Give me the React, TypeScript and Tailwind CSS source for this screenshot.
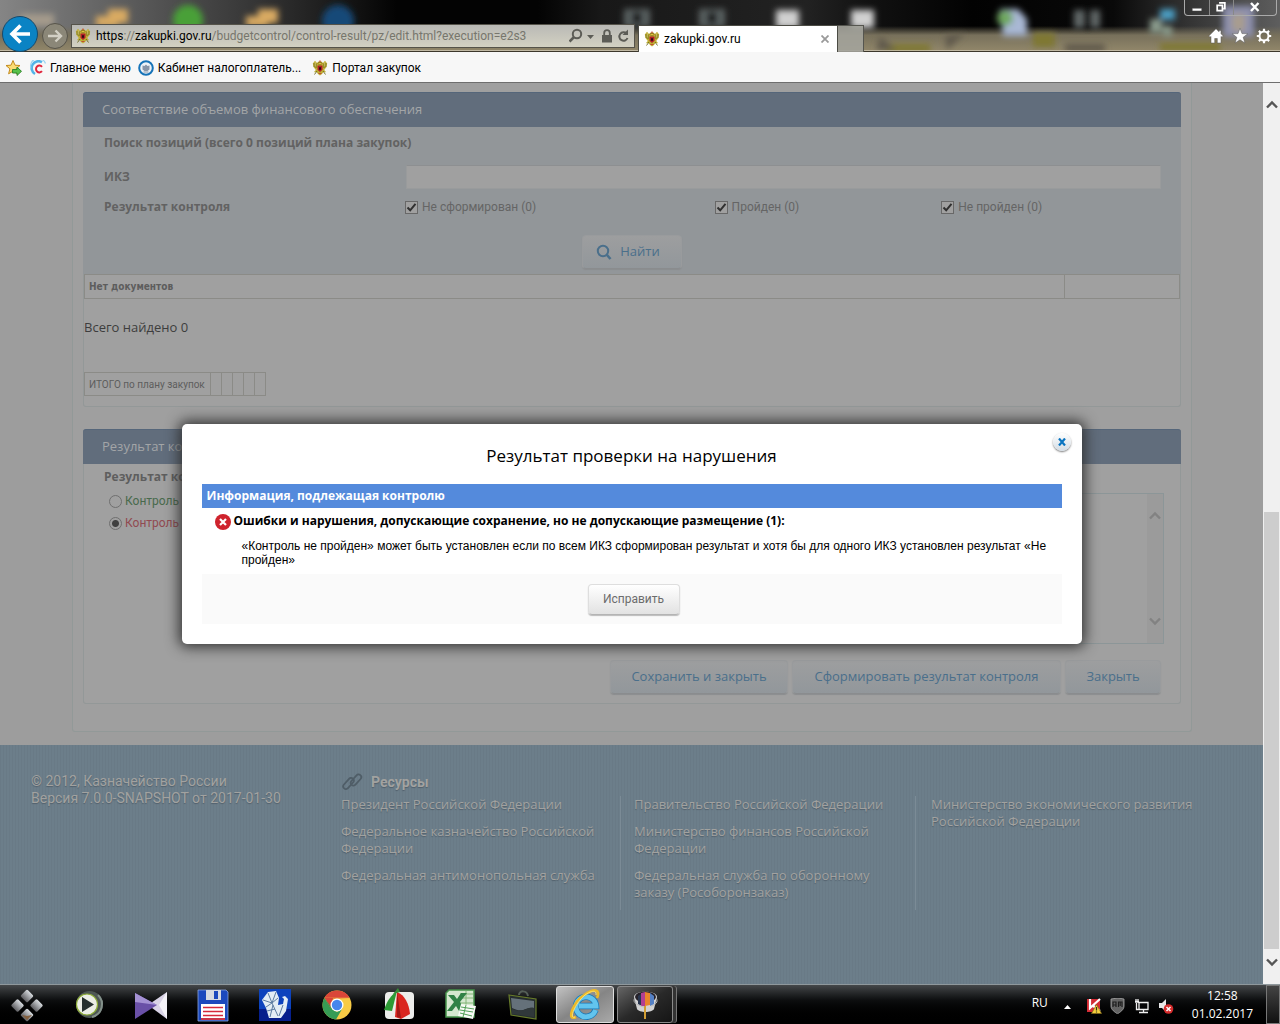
import React from "react";

function Eagle() {
  return (
    <svg className="h-4 w-4 shrink-0" viewBox="0 0 16 16" aria-hidden="true">
      <path d="M.800 3.500L3 .800l2 2.200 1.500-1.500h3L11 3l2-2.200 2.200 2.700-.700 3.500-2.300 3 2 2.300-2.700-.300-1.500 2L8 15.500 6 14l-1.500-2-2.700.300 2-2.300L1.500 7z" fill="#bfae35" />
      <path d="M2.200 3v4M4 3.500V8M13.800 3v4M12 3.500V8M5 11l-2.500 3.500M11 11l2.500 3.500" stroke="#6b681c" strokeWidth=".9" />
      <path d="M3.200 2.500v4M12.800 2.500v4" stroke="#e9dd86" strokeWidth=".7" />
      <path d="M5.800 3.500L7 2l1 1 1-1 1.200 1.500L8 5z" fill="#e2c33c" stroke="#705d1a" strokeWidth=".6" />
      <path d="M5.500 5.500h5v4.300L8 12 5.500 9.800z" fill="#b01f27" />
      <path d="M7 7.200h2v2.600H7z" fill="#2b1015" />
      <path d="M7 1.200h2M6.500 13.500h3" stroke="#c04d30" />
    </svg>
  );
}

function Wallpaper() {
  return (
    <svg className="absolute inset-0 h-full w-full" preserveAspectRatio="none" viewBox="0 0 1280 52" aria-hidden="true">
      <defs>
        <linearGradient id="sky" x1="0" x2="1">
          <stop offset="0" stopColor="#858585" />
          <stop offset=".1" stopColor="#5c5c5c" />
          <stop offset=".2" stopColor="#353535" />
          <stop offset=".255" stopColor="#1d1d1d" />
          <stop offset=".31" stopColor="#030303" />
          <stop offset=".42" stopColor="#030303" />
          <stop offset=".47" stopColor="#181818" />
          <stop offset=".63" stopColor="#222" />
          <stop offset=".68" stopColor="#111" />
          <stop offset=".76" stopColor="#020202" />
          <stop offset=".87" stopColor="#090909" />
          <stop offset=".93" stopColor="#343434" />
          <stop offset="1" stopColor="#5e5e5e" />
        </linearGradient>
        <linearGradient id="sand" y2="1" x2="0">
          <stop offset="0" stopColor="#77705b" stopOpacity="0" />
          <stop offset=".35" stopColor="#77705b" />
          <stop offset="1" stopColor="#93886b" />
        </linearGradient>
        <filter id="soft" filterUnits="userSpaceOnUse" x="0" y="-10" width="1280" height="80">
          <feGaussianBlur stdDeviation="3" />
        </filter>
      </defs>
      <path fill="url(#sky)" d="M0 0h1280v52H0z" />
      <path fill="url(#sand)" d="M0 26h1280v26H0z" />
      <g filter="url(#soft)">
        <path d="M20 14h34v12H20z" fill="#a59b8c" />
        <path d="M108 9h20v14h-10v4H96v-11h12z" fill="#d9aa62" />
        <circle cx="188" cy="20" r="15" fill="#48a038" />
        <path d="M258 9h20v14h-10v4h-22v-11h12z" fill="#d9aa62" />
        <circle cx="338" cy="21" r="16" fill="#184a78" />
        <path d="M624 9h26v18h-26zM699 9h26v18h-26z" fill="#5c6363" />
        <path d="M632 12h10v12h-10zM707 12h10v12h-10z" fill="#15191b" />
        <path d="M776 10h23v18h-23zM851 10h23v18h-23z" fill="#d0d0d0" />
        <path d="M1000 9h18l9 10v17h-24z" fill="#a9b8d4" />
        <circle cx="1005" cy="18" r="8" fill="#70a860" />
        <path d="M1074 10h26v18h-26z" fill="#656c6c" />
        <path d="M1083 10h9v18h-9z" fill="#0e1111" />
        <path d="M1160 9h15v11h-15z" fill="#4b9fc4" />
        <path d="M1150 19h12v14h-12zM1163 26h9v10h-9z" fill="#8b9c8d" />
        <path d="M1223 6h31v31h-31z" fill="#8d90ae" />
        <path d="M1232 14h13v17h-13z" fill="#a99d8e" />
        <path d="M885 44h45v9h-45zM1033 33h22v14h-22zM1160 43h60v8h-60z" fill="#7f7830" />
        <path d="M945 36l20-3-18 17zM1065 44h40v8h-40zM880 36l16 14h-20z" fill="#5f594b" />
      </g>
      <path d="M0 50.500h1280" stroke="#d5cfbd" strokeOpacity=".7" />
      <path d="M0 51.500h1280" stroke="#3d382c" />
    </svg>
  );
}

const frame = "rounded-[3px] border border-[#939898]";

function SectionHead({ children }: { children: React.ReactNode }) {
  return (
    <h2 className="-mx-px flex h-[35px] items-center rounded-t-[3px] border-t border-[#55667a] bg-[#616d7c] px-[19px] text-[13px] text-[#a3a5a7]">
      {children}
    </h2>
  );
}

function Check({ label }: { label: string }) {
  return (
    <label className="flex items-center gap-1 font-[Roboto] text-xs text-[#656565]">
      <span className="relative flex h-[13px] w-[13px]">
        <input type="checkbox" defaultChecked className="h-[13px] w-[13px] appearance-none border border-[#686868] bg-[#a0a0a0]" />
        <svg className="pointer-events-none absolute inset-0" viewBox="0 0 13 13" aria-hidden="true">
          <path d="M2.500 6.500L5.200 9.300 10.500 2.800" fill="none" stroke="#303030" strokeWidth="2" />
        </svg>
      </span>
      {label}
    </label>
  );
}

function Radio({ label, tone, checked }: { label: string; tone: string; checked?: boolean }) {
  return (
    <label className={"flex h-[22px] items-center gap-[3px] font-[Roboto] text-xs " + tone}>
      <input
        type="radio"
        name="result"
        defaultChecked={checked}
        className="h-[13px] w-[13px] appearance-none rounded-full border border-[#6f6f6f] bg-[#a0a0a0] checked:bg-[radial-gradient(circle,#404040_3px,#a0a0a0_4px)]"
      />
      {label}
    </label>
  );
}

const pageButton =
  "flex h-[34px] items-center justify-center rounded-[4px] border border-[#999b9d] border-b-[#8a8c8e] bg-linear-to-b from-[#9d9e9f] to-[#92979b] text-[13px] text-[#4a6f8b] shadow-[0_1px_1px_#8b8d8f]";

function Arrow({ up, className }: { up?: boolean; className: string }) {
  return (
    <svg className={className} viewBox="0 0 12 9" aria-hidden="true">
      <path d={up ? "M1 7.500L6 2.500 11 7.500" : "M1 1.500L6 6.500 11 1.500"} fill="none" stroke="currentColor" strokeWidth="2.400" />
    </svg>
  );
}

function Browser() {
  return (
    <header className="shrink-0 font-[Roboto] text-xs">
      <div className="relative h-[52px]">
        <Wallpaper />
        <div className="relative flex h-full items-end">
          <button aria-label="Назад" className="ml-[2px] flex h-9 w-9 items-center justify-center rounded-full border border-[#18496a] bg-[#0a83c4]">
            <svg className="h-6 w-6" viewBox="0 0 24 24" aria-hidden="true">
              <path d="M22 12H4M12.500 3.500L4 12l8.500 8.500" fill="none" stroke="#fff" strokeWidth="3.600" />
            </svg>
          </button>
          <button aria-label="Вперёд" className="mb-[3px] ml-1 flex h-[26px] w-[26px] items-center justify-center rounded-full border border-[#57544a] bg-[#8b8778]">
            <svg className="h-[18px] w-[18px]" viewBox="0 0 18 18" aria-hidden="true">
              <path d="M2 9h13M9.500 3.500L15 9l-5.500 5.500" fill="none" stroke="#d3d0c5" strokeWidth="2.400" />
            </svg>
          </button>
          <div className="mb-1 ml-[3px] flex h-6 w-[564px] items-center border border-[#55534a] bg-linear-to-b from-[#b9b9b5] to-[#d3d1c2] px-[3px] text-[#77766d]">
            <Eagle />
            <p className="ml-[5px] flex-1 whitespace-nowrap">
              <span className="text-black">https</span>://<span className="text-black">zakupki.gov.ru</span>/budgetcontrol/control-result/pz/edit.html?execution=e2s3
            </p>
            <svg className="h-4 w-[62px] text-[#5c5c56]" viewBox="0 0 62 16" fill="none" stroke="currentColor" aria-hidden="true">
              <circle cx="8" cy="6" r="4.200" strokeWidth="2" />
              <path d="M5 9L.500 13.500" strokeWidth="2.600" />
              <path d="M18 7h7l-3.500 4z" fill="currentColor" stroke="none" />
              <path d="M33 7h10v7.500H33z" fill="currentColor" stroke="none" />
              <path d="M35.200 8V5a2.800 2.800 0 015.600 0V8" strokeWidth="1.800" />
              <path d="M57.500 5.500A4.200 4.200 0 1058.500 10" strokeWidth="2" />
              <path d="M59 1.500v5.500h-5.500z" fill="currentColor" stroke="none" />
            </svg>
          </div>
          <div className="ml-[3px] flex h-[27px] w-[200px] items-center border border-b-0 border-[#4b4b44] bg-white pl-[5px] pr-2 text-black">
            <Eagle />
            <span className="ml-1 flex-1">zakupki.gov.ru</span>
            <button aria-label="Закрыть вкладку">
              <svg className="h-2 w-2" viewBox="0 0 8 8" aria-hidden="true">
                <path d="M.500.500l7 7M7.500.500l-7 7" stroke="#9a9a9a" strokeWidth="1.800" />
              </svg>
            </button>
          </div>
          <button aria-label="Новая вкладка" className="h-[27px] w-[26px] border border-b-0 border-l-0 border-[#55554f] bg-[#a3a39b]/90" />
          <div className="ml-auto flex flex-col items-end self-stretch">
            <div className="mr-[3px] flex h-4 overflow-hidden rounded-b-[4px] border border-t-0 border-[#aaa] text-white">
              <button aria-label="Свернуть" className="w-[25px] border-r border-[#888]">
                <svg viewBox="0 0 25 15" aria-hidden="true"><path d="M7.500 8.500h10v3h-10z" fill="#fff" stroke="#444" strokeWidth=".6" /></svg>
              </button>
              <button aria-label="Восстановить" className="w-6 border-r border-[#888]">
                <svg viewBox="0 0 24 15" fill="none" aria-hidden="true">
                  <path d="M9.500 3h6v6h-1.500M7.500 5.500h5.500v5.500H7.500z" stroke="#fff" strokeWidth="1.800" />
                </svg>
              </button>
              <button aria-label="Закрыть окно" className="w-[42px]">
                <svg viewBox="0 0 42 15" aria-hidden="true"><path d="M17 3l7.500 8M24.500 3L17 11" stroke="#fff" strokeWidth="2.400" /></svg>
              </button>
            </div>
            <div className="mr-2 mt-[12px] flex gap-2">
              <button aria-label="Домашняя страница">
                <svg className="h-4 w-4" viewBox="0 0 16 16" aria-hidden="true">
                  <path d="M8 .800L.800 8l1.300 1.200.900-.800V15h3.700v-4.500h2.600V15H13V8.400l.900.800L15.200 8 13 5.700V2.500h-2v1.300z" fill="#fff" stroke="#555" strokeWidth=".5" />
                </svg>
              </button>
              <button aria-label="Избранное">
                <svg className="h-4 w-4" viewBox="0 0 16 16" aria-hidden="true">
                  <path d="M8 .300l2 5.300 5.800.200-4.600 3.500L12.900 15 8 11.700 3.100 15l1.700-5.700L.200 5.800 6 5.600z" fill="#fff" stroke="#555" strokeWidth=".5" />
                </svg>
              </button>
              <button aria-label="Сервис">
                <svg className="h-4 w-4" viewBox="0 0 16 16" fill="none" stroke="#fff" aria-hidden="true">
                  <circle cx="8" cy="8" r="4.500" strokeWidth="2" />
                  <path d="M8 .800v2.500M8 12.700v2.500M.800 8h2.500M12.700 8h2.500M2.900 2.900l1.800 1.800M11.300 11.300l1.800 1.800M13.100 2.900l-1.800 1.800M4.700 11.300l-1.800 1.800" strokeWidth="2.200" />
                </svg>
              </button>
            </div>
          </div>
        </div>
      </div>
      <nav className="flex h-[31px] items-center border-b border-[#6e6e6e] bg-[#f7f7f7] pl-[5px] pt-px text-black">
        <button aria-label="Добавить в избранное" className="mr-[7px]">
          <svg className="h-[18px] w-[18px]" viewBox="0 0 18 18" aria-hidden="true">
            <path d="M8 1.500l2 4.700 5 .300-3.900 3.300 1.300 5L8 12.200l-4.400 2.600 1.300-5L1 6.500l5-.300z" fill="#fbdc73" stroke="#c48a1c" />
            <path d="M7.500 10.500h4.500V8l4.500 4.300-4.500 4.200V14H7.500z" fill="#57c14a" stroke="#2a8028" strokeWidth=".9" />
          </svg>
        </button>
        <a href="#menu" className="mr-[7px] flex items-center gap-1">
          <svg className="h-4 w-4" viewBox="0 0 16 16" fill="none" aria-hidden="true">
            <path d="M12 2.200A6.500 6.500 0 005 14" stroke="#53b4e8" strokeWidth="2.600" />
            <path d="M15.500 3.500A7 7 0 001 8.500" stroke="#9bd3f2" strokeWidth="1.200" />
            <path d="M12 6.800A3.400 3.400 0 1012 11.200" stroke="#e0263d" strokeWidth="2" />
          </svg>
          Главное меню
        </a>
        <a href="#cabinet" className="mr-[11px] flex items-center gap-1">
          <svg className="h-4 w-4" viewBox="0 0 16 16" aria-hidden="true">
            <circle cx="8" cy="8" r="6.800" fill="#eef3f8" stroke="#1673b8" strokeWidth="2" />
            <path d="M4.500 5.500l2 .500L8 4.500 9.500 6l2-.500v4L9.500 11h-3l-2-1.500z" fill="#8795a8" />
            <path d="M5.500 12h5" stroke="#8795a8" />
          </svg>
          Кабинет налогоплатель...
        </a>
        <a href="#portal" className="flex items-center gap-1">
          <Eagle />
          Портал закупок
        </a>
      </nav>
    </header>
  );
}

function Finance() {
  return (
    <section className={frame + " border-t-0 bg-[#a0a0a0]"}>
      <SectionHead>Соответствие объемов финансового обеспечения</SectionHead>
      <div className="-mx-px bg-[#929699] px-[21px] pb-[5px] pt-[6px] text-[#626262]">
        <h3 className="h-[29px] text-xs font-bold leading-5">Поиск позиций (всего 0 позиций плана закупок)</h3>
        <div className="flex h-[30px] items-center">
          <label htmlFor="ikz" className="w-[302px] text-xs font-bold">ИКЗ</label>
          <input id="ikz" className="mr-[-1px] h-6 flex-1 border border-[#999b9c] border-t-[#8d8f91] bg-[#a0a0a0] px-1 text-xs outline-none" />
        </div>
        <div className="mt-px flex h-7 items-center">
          <span className="w-[301px] text-xs font-bold">Результат контроля</span>
          <div className="grid flex-1 grid-cols-[310fr_227fr_219fr]">
            <Check label="Не сформирован (0)" />
            <Check label="Пройден (0)" />
            <Check label="Не пройден (0)" />
          </div>
        </div>
        <div className="mt-[14px] flex justify-center">
          <button className={pageButton + " w-[100px] gap-2 pr-2"}>
            <svg className="h-4 w-4" viewBox="0 0 16 16" fill="none" stroke="currentColor" strokeWidth="2" aria-hidden="true">
              <circle cx="7" cy="7" r="5.200" />
              <path d="M11 11l3.500 4" strokeWidth="2.600" />
            </svg>
            Найти
          </button>
        </div>
      </div>
      <table className="w-full border-collapse font-[DejaVu_Sans_Condensed,DejaVu_Sans] text-[10px] font-bold text-[#5d5d5d]">
        <tbody>
          <tr className="h-6">
            <td className="border border-[#8b8b87] px-1">Нет документов</td>
            <td className="w-[115px] border border-[#8b8b87]" />
          </tr>
        </tbody>
      </table>
      <p className="mt-[18px] text-[13px] leading-5 text-[#3d3d3d]">Всего найдено 0</p>
      <table className="mb-[10px] mt-[35px] border-collapse text-[10px] text-[#5d5d5d]">
        <tbody>
          <tr className="h-[23px]">
            <td className="w-[126px] whitespace-nowrap border border-[#8b8b87] px-1 font-[Roboto]">ИТОГО по плану закупок</td>
            {[1, 2, 3, 4, 5].map((n) => (
              <td key={n} className="w-[11px] border border-[#8b8b87]" />
            ))}
          </tr>
        </tbody>
      </table>
    </section>
  );
}

function Result() {
  return (
    <section className={frame + " mt-[22px] border-t-0 bg-[#a0a0a0]"}>
      <SectionHead>Результат контроля</SectionHead>
      <div className="flex pl-5 pr-4 pt-[3px]">
        <fieldset className="w-[300px]">
          <legend className="text-xs font-bold leading-5 text-[#5e5e5e]">Результат контроля</legend>
          <div className="pl-[5px] pt-[3px]">
            <Radio label="Контроль пройден" tone="text-[#486a4c]" />
            <Radio label="Контроль не пройден" tone="text-[#914a50]" checked />
          </div>
        </fieldset>
        <div className="relative mt-[26px] flex-1">
          <textarea aria-label="Комментарий" className="block h-[151px] w-full resize-none border border-[#8c9698] bg-[#a0a0a0]" />
          <div className="absolute inset-y-px right-px flex w-4 flex-col items-center justify-between bg-[#9b9b9b] py-[17px] text-[#828282]">
            <Arrow up className="h-[9px] w-3" />
            <Arrow className="h-[9px] w-3" />
          </div>
        </div>
      </div>
      <div className="mb-[9px] mr-[19px] mt-4 flex justify-end gap-1">
        <button className={pageButton + " w-[178px]"}>Сохранить и закрыть</button>
        <button className={pageButton + " w-[269px]"}>Сформировать результат контроля</button>
        <button className={pageButton + " w-[96px]"}>Закрыть</button>
      </div>
    </section>
  );
}

const links = [
  ["Президент Российской Федерации", "Федеральное казначейство Российской Федерации", "Федеральная антимонопольная служба"],
  ["Правительство Российской Федерации", "Министерство финансов Российской Федерации", "Федеральная служба по оборонному заказу (Рособоронзаказ)"],
  ["Министерство экономического развития Российской Федерации"],
];

function Footer() {
  return (
    <footer className="mt-[13px] flex flex-1 bg-[repeating-linear-gradient(90deg,#697a86_0_1px,#6c7e8a_1px_3px)] pt-[28px] text-[13px] leading-[17px] text-[#a2a2a0] [text-shadow:0_1px_1px_#52606c]">
      <div className="w-[341px] shrink-0 pl-[31px] font-[Roboto] text-sm leading-[17px]">
        <p>© 2012, Казначейство России</p>
        <p>Версия 7.0.0-SNAPSHOT от 2017-01-30</p>
      </div>
      <div className="flex-1">
        <h2 className="flex items-center gap-2 font-[Roboto] text-sm font-bold leading-[17px]">
          <svg className="h-[18px] w-[22px]" viewBox="0 0 22 18" fill="none" stroke="#4f5d67" strokeWidth="1.800" aria-hidden="true">
            <rect x="-6.500" y="-2.700" width="13" height="5.400" rx="2.700" transform="translate(7.500 10.500) rotate(-48)" />
            <rect x="-6.500" y="-2.700" width="13" height="5.400" rx="2.700" transform="translate(15 7) rotate(-48)" />
          </svg>
          Ресурсы
        </h2>
        <div className="mt-[5px] flex">
          {links.map((column, i) => (
            <ul
              key={column[0]}
              className={
                i === 0
                  ? "h-[114px] w-[280px] border-r border-[#7b8b96] pr-5"
                  : i === 1
                    ? "h-[114px] w-[295px] border-r border-[#7b8b96] pl-[13px] pr-5"
                    : "flex-1 pl-[15px] pr-[60px]"
              }
            >
              {column.map((text) => (
                <li key={text} className="mb-[10px]">
                  <a href="#resource">{text}</a>
                </li>
              ))}
            </ul>
          ))}
        </div>
      </div>
    </footer>
  );
}

function Modal() {
  return (
    <div className="absolute inset-x-0 top-[341px] flex justify-center">
      <div role="dialog" aria-labelledby="dialog-title" className="relative w-[900px] rounded-[5px] bg-white px-5 pb-5 text-black shadow-[0_0_14px_3px_#333]">
        <button aria-label="Закрыть окно сообщения" className="absolute right-[11px] top-[9px] flex h-[18px] w-[18px] items-center justify-center rounded-full bg-linear-to-b from-white to-[#d3dce4] shadow-[0_1px_2px_#777]">
          <svg className="h-2 w-[10px]" viewBox="0 0 10 8" aria-hidden="true">
            <path d="M2 .500l6 7M8 .500l-6 7" stroke="#0a74c0" strokeWidth="2.200" />
          </svg>
        </button>
        <h2 id="dialog-title" className="h-[60px] pt-5 text-center text-[17px] leading-6">
          Результат проверки на нарушения
        </h2>
        <h3 className="h-6 bg-[#548adc] px-[5px] text-xs font-bold leading-6 text-white">Информация, подлежащая контролю</h3>
        <div className="flex items-center gap-[3px] pl-[13px] pt-1 text-xs font-bold">
          <svg className="mt-[2px] h-4 w-4" viewBox="0 0 16 16" aria-hidden="true">
            <circle cx="8" cy="8" r="8" fill="#cf232d" />
            <path d="M5 5l6 6M11 5l-6 6" stroke="#fff" strokeWidth="2.200" />
          </svg>
          Ошибки и нарушения, допускающие сохранение, но не допускающие размещение (1):
        </div>
        <p className="mb-[7px] mt-[9px] pl-10 font-[Liberation_Sans] text-xs leading-[14px]">
          «Контроль не пройден» может быть установлен если по всем ИКЗ сформирован результат и хотя бы для одного ИКЗ установлен результат «Не пройден»
        </p>
        <div className="flex h-[50px] items-center justify-center bg-[#fafafa] pl-1">
          <button className="h-[31px] w-[92px] rounded-[4px] border border-[#dedede] border-b-[#b4b4b4] bg-linear-to-b from-white to-[#e2e2e2] font-[Roboto] text-xs text-[#6c6c6c] shadow-[0_1px_1px_#bbb]">
            Исправить
          </button>
        </div>
      </div>
    </div>
  );
}

const icon = "h-9 w-9";

const apps = [
  {
    name: "Пуск",
    art: (
      <svg className={icon} viewBox="0 0 36 36" aria-hidden="true">
        <defs><linearGradient id="tile" x2="0" y2="1"><stop stopColor="#d8dce0" /><stop offset="1" stopColor="#5d5d61" /></linearGradient></defs>
        {["18 9", "8.500 18.500", "27.500 18.500", "18 28"].map((p) => (
          <rect key={p} x="-4.800" y="-4.800" width="9.600" height="9.600" rx="1.500" fill="url(#tile)" transform={`translate(${p}) rotate(45)`} />
        ))}
        <path d="M13 28l5 5 5-5-5 1z" fill="#83603f" />
      </svg>
    ),
  },
  {
    name: "Проигрыватель",
    art: (
      <svg className={icon} viewBox="0 0 36 36" aria-hidden="true">
        <circle cx="18.500" cy="17.500" r="13.500" fill="#4e5754" />
        <path d="M27 8a13 13 0 01-6 22" fill="none" stroke="#83908a" strokeWidth="2" />
        <circle cx="16" cy="17.500" r="10.500" fill="#eceee6" stroke="#8ead38" strokeWidth="1.200" />
        <path d="M11 10l12 7.500L11 25z" fill="#26302e" />
      </svg>
    ),
  },
  {
    name: "KMPlayer",
    art: (
      <svg className={icon} viewBox="0 0 36 36" aria-hidden="true">
        <path d="M34 5v27L15 18z" fill="#d9d3e6" /><path d="M34 5v27l-8-14z" fill="#f5f3f8" />
        <path d="M2 6l22 12L2 32z" fill="#6a50a7" /><path d="M2 6l22 12-22-3z" fill="#a491d3" />
      </svg>
    ),
  },
  {
    name: "Дискета",
    art: (
      <svg className={icon} viewBox="0 0 36 36" aria-hidden="true">
        <path d="M3 3h28l2 2v29H3z" fill="#1c49bd" stroke="#8ba5dd" strokeWidth=".8" />
        <path d="M11 3h15v10H11z" fill="#d7dbe1" /><path d="M19 4h4v8h-4z" fill="#1c49bd" />
        <path d="M6 17h24v15H6z" fill="#fff" /><path d="M8 20.500h20M8 24.500h20M8 28.500h20" stroke="#d6293b" strokeWidth="1.300" /><path d="M6 31h24v2H6z" fill="#c93549" />
      </svg>
    ),
  },
  {
    name: "Оригами",
    art: (
      <svg className={icon} viewBox="0 0 36 36" aria-hidden="true">
        <path d="M2 2h32v32H2z" fill="#0d43bd" /><path d="M2 22h32v12H2z" fill="#061f8c" />
        <path d="M5 13l6-8 8-1 3 7-1 7 5-1 1-5-2-2 3-1 3 3-2 12-5 7H12L9 21z" fill="#e3edf5" />
        <path d="M11 6l4 10M19 5l-4 11M6 13l9 3-6 4M15 16l6-5M15 16l6 13M10 24l8-2M22 29l4-11M13 30l3-12" fill="none" stroke="#5d7da1" />
      </svg>
    ),
  },
  {
    name: "Chrome",
    art: (
      <svg className={icon} viewBox="0 0 36 36" aria-hidden="true">
        <circle cx="18" cy="18" r="14.500" fill="#f8cb45" />
        <path d="M5.400 10.800A14.500 14.500 0 0130.600 10.800H18z" fill="#da4638" />
        <path d="M5.400 10.800A14.500 14.500 0 0017 32.500l6.500-11.300L18 25l-6-3.500z" fill="#369c55" />
        <path d="M5.400 10.800l6.400 10.700L14 11.500h16.900" fill="#da4638" />
        <path d="M5.400 10.800l6.400 10.700 3 2" fill="#369c55" />
        <circle cx="18" cy="18" r="6.500" fill="#fff" /><circle cx="18" cy="18" r="5.200" fill="#4686ec" />
      </svg>
    ),
  },
  {
    name: "Захват экрана",
    art: (
      <svg className={icon} viewBox="0 0 36 36" aria-hidden="true">
        <rect x="4" y="5" width="29" height="27" rx="4" fill="#ededeb" />
        <path d="M16 4C10 8 6 14 3 23l8 1z" fill="#2d9a35" /><path d="M16 5c8 3 12 12 13 22l-9 5-6-2z" fill="#da261f" />
        <path d="M12 7l5-6 2 4z" fill="#368c35" /><path d="M16 5l4 26-4-1z" fill="#a31a18" />
      </svg>
    ),
  },
  {
    name: "Excel",
    art: (
      <svg className={icon} viewBox="0 0 36 36" aria-hidden="true">
        <path d="M6 3h25v27H3V6z" fill="#d5e8cf" stroke="#46934b" strokeWidth="1.500" />
        <path d="M17 7h13M17 11h13M17 16h13M23 4v15" stroke="#83b578" />
        <path d="M5 8h6l3 4 4-6h6l-7 9 5 9h-6l-3-5-4 5H4l7-9z" fill="#308246" />
        <path d="M18 17l15 2-3 13-15-3z" fill="#f7faf5" /><path d="M18 20l13 2M17 23l13 2M17 26l12 3M23 18l-3 12" stroke="#52a057" />
      </svg>
    ),
  },
  {
    name: "Портфель",
    art: (
      <svg className={icon} viewBox="0 0 36 36" aria-hidden="true">
        <path d="M14 8c0-5 8-5 9 1" fill="none" stroke="#555f58" strokeWidth="2" />
        <path d="M4 8l27 4v20L6 28z" fill="#262d2f" stroke="#687c2a" strokeWidth="1.200" />
        <path d="M6 11l23 3v7c-8-2-10 6-22 0z" fill="#65717a" /><path d="M7 22c12 5 14-3 22-1v9L7 27z" fill="#30383a" />
      </svg>
    ),
  },
  {
    name: "Internet Explorer",
    art: (
      <svg className={icon} viewBox="0 0 36 36" aria-hidden="true">
        <path d="M28.500 23A10 10 0 1129 19H12" fill="none" stroke="#1c79b6" strokeWidth="6.400" />
        <path d="M28.500 23A10 10 0 1129 19H12" fill="none" stroke="#62c4ee" strokeWidth="4.800" />
        <path d="M9 30C-1 35 6 15 17 8c10-7 17-6 13 3" fill="none" stroke="#edb928" strokeWidth="2.600" />
        <path d="M8 30C1 33 9 15 18 8c7-5 12-5 11 0" fill="none" stroke="#ffe36a" strokeWidth="1" />
      </svg>
    ),
  },
  {
    name: "Рисование",
    art: (
      <svg className={icon} viewBox="0 0 36 36" aria-hidden="true">
        <path d="M7 10c0-7 23-7 23 0l-3 12c-2 4-15 4-17 0z" fill="#d3d3d3" />
        <ellipse cx="18.500" cy="10" rx="10.500" ry="5.500" fill="#262229" />
        <path d="M11 9l4-3v13l-4-2z" fill="#29364f" /><path d="M14 6l4-1v14h-4z" fill="#b23e92" /><path d="M18 5l5 1v12l-5 1z" fill="#e9842b" /><path d="M23 6l4 3v8l-4 2z" fill="#5480c4" />
        <path d="M18 19v13" stroke="#d29e34" strokeWidth="2" /><path d="M8 11c-4 5 5 8 9 9M29 11c3 4-1 7-5 8" fill="none" stroke="#bbb" />
      </svg>
    ),
  },
];

function cell(i: number) {
  if (i === 0) return "flex w-[58px] items-center pl-[9px]";
  if (i === 9)
    return "my-px -ml-px mr-px flex w-[58px] translate-x-0 items-center justify-center rounded-[3px] border border-[#ddd] bg-linear-to-br from-[#c2c2c2] via-[#858585] to-[#a9a9a9]";
  if (i === 10)
    return "my-px ml-[2px] flex w-[56px] items-center justify-center rounded-[3px] border border-[#8a8a8a] bg-linear-to-br from-[#666] via-[#292929] to-[#151515] shadow-[3px_0_0_#333,4px_0_0_#777]";
  if (i === 8) return "mr-[3px] flex w-[62px] items-center justify-center";
  return "flex w-[62px] items-center justify-center";
}

function Taskbar() {
  return (
    <div className="flex h-10 shrink-0 items-stretch border-t border-[#8f989c] bg-black bg-linear-to-b from-[#45484a] from-0% via-[#0c0d0e] via-40% to-black font-[Open_Sans] text-xs text-white">
      <div className="flex items-stretch">
        {apps.map((app, i) => (
          <button key={app.name} aria-label={app.name} className={cell(i)}>
            {app.art}
          </button>
        ))}
      </div>
      <div className="ml-auto flex items-center">
        <span className="mb-1 mr-4">RU</span>
        <svg className="mr-[15px] mt-1 h-1 w-[7px]" viewBox="0 0 7 4" aria-hidden="true"><path d="M0 4l3.500-4L7 4z" fill="#fff" /></svg>
        <svg className="mt-[2px] h-4 w-[88px]" viewBox="0 0 88 16" aria-hidden="true">
          <path d="M1 1h13v13H1z" fill="#d42a33" /><path d="M4 1v9l10-9M6 7l8 6" fill="none" stroke="#fff" strokeWidth="2.200" />
          <path d="M10.500 6.500l5 9h-10z" fill="#f5cf3c" stroke="#7f6418" strokeWidth=".7" /><path d="M10.500 9v3.500M10.500 13.500v1" stroke="#332" strokeWidth="1.200" />
          <path d="M25 1l7-1 6 1v7c0 4-4 6-6.500 8C29 14 25 12 25 8z" fill="#646464" stroke="#aaa" strokeWidth=".8" />
          <path d="M27 9V4h3v5M27 7h3M32.500 9V4H36v5M34.200 4v4" fill="none" stroke="#1d1d1d" strokeWidth="1.200" />
          <path d="M53 4.500h9v7h-9zM57.500 12v2.500M53 14.500h9M50 1v4M52 1v4M49 3.500h4M50.500 5v6.500H53" fill="none" stroke="#f0f0f0" strokeWidth="1.300" />
          <path d="M73 5h3l4-4v13l-4-4h-3z" fill="#e7e7e7" />
          <circle cx="82.500" cy="11" r="4.800" fill="#d52b2b" /><path d="M80.500 9l4 4M84.500 9l-4 4" stroke="#fff" strokeWidth="1.500" />
        </svg>
        <time className="ml-[18px] mr-[13px] text-center leading-[18px]">12:58<br />01.02.2017</time>
        <button aria-label="Свернуть все окна" className="h-full w-[14px] border border-[#777] bg-linear-to-b from-[#444] to-[#111]" />
      </div>
    </div>
  );
}

export default function App() {
  return (
    <div className="flex min-h-screen flex-col bg-[#9d9d9d] font-[Open_Sans,sans-serif]">
      <Browser />
      <div className="flex flex-1">
        <div className="relative flex flex-1 flex-col">
          <main className="ml-[72px] mr-[71px] rounded-b-[3px] border border-t-0 border-[#929998] bg-[#9f9f9f] px-[10px] pb-[27px] pt-[9px]">
            <Finance />
            <Result />
          </main>
          <Footer />
          <Modal />
        </div>
        <div className="flex w-[17px] flex-col items-center bg-[#f0f0f0] pt-[17px] text-[#555]">
          <Arrow up className="h-[9px] w-3" />
          <div className="mt-auto h-[437px] w-[15px] bg-[#cdcdcd]" />
          <Arrow className="mb-[17px] mt-[9px] h-[9px] w-3" />
        </div>
      </div>
      <Taskbar />
    </div>
  );
}
